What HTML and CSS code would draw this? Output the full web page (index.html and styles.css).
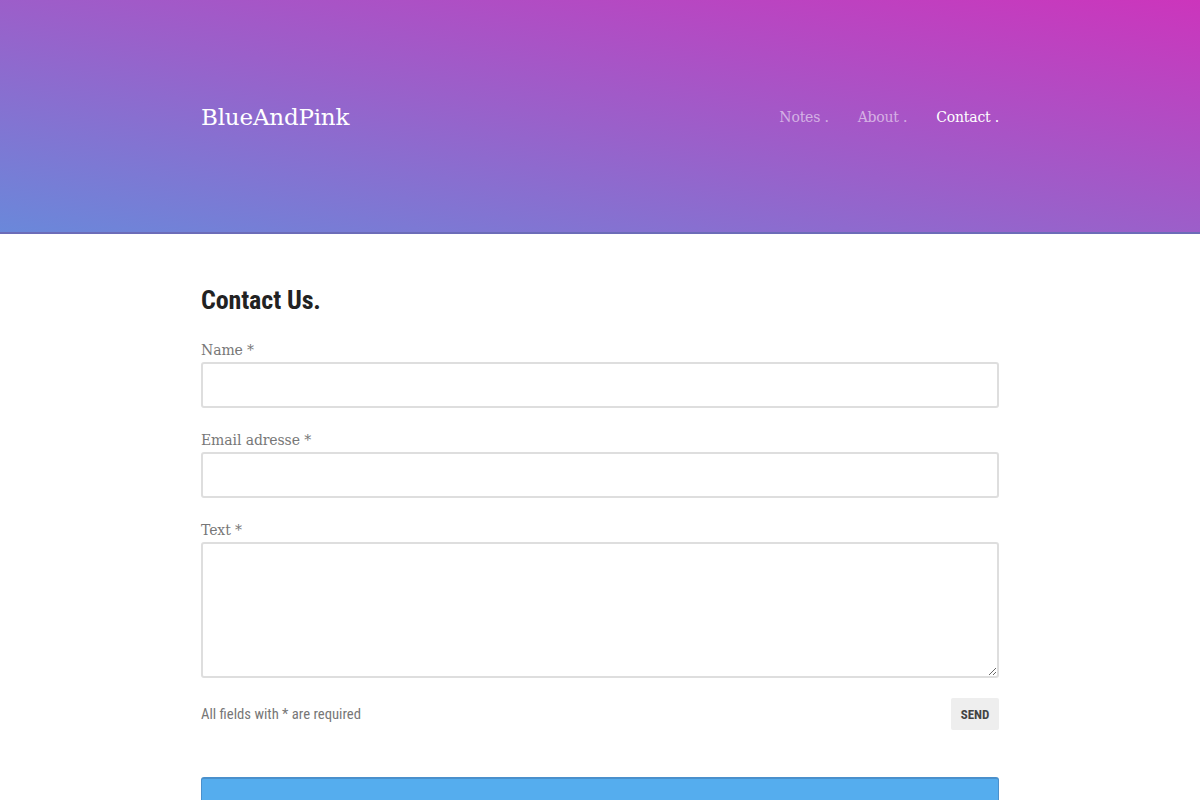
FILE: index.html
```html
<!DOCTYPE html>
<html lang="en">
<head>
<meta charset="utf-8">
<title>Contact - BlueAndPink</title>
<link rel="stylesheet" href="styles.css">
</head>
<body>
<header class="site-header">
  <div class="wrap header-row">
    <a class="brand" href="#">BlueAndPink</a>
    <nav class="nav">
      <a class="nav-link" href="#">Notes .</a>
      <a class="nav-link" href="#">About .</a>
      <a class="nav-link active" href="#">Contact .</a>
    </nav>
  </div>
</header>
<main class="wrap content">
  <h1 class="page-title">Contact Us.</h1>
  <form class="contact-form">
    <label class="field-label" for="name">Name *</label>
    <input class="field-input" id="name" type="text">
    <label class="field-label" for="email">Email adresse *</label>
    <input class="field-input" id="email" type="email">
    <label class="field-label" for="text">Text *</label>
    <textarea class="field-textarea" id="text"></textarea>
    <div class="form-footer">
      <span class="required-note">All fields with * are required</span>
      <button class="send-btn" type="button">SEND</button>
    </div>
  </form>
  <div class="blue-box"></div>
</main>
</body>
</html>
```
FILE: styles.css
```css
* { box-sizing: border-box; }
html, body { margin: 0; padding: 0; background: #fff; overflow: hidden; height: 100%; }
body { font-family: "Roboto Slab", "DejaVu Serif", "Liberation Serif", serif; }

.wrap { width: 798px; margin: 0 auto; }

.site-header {
  height: 234px;
  background: linear-gradient(to top right, #6a88da 0%, #9a60ca 48%, #cc35bc 100%);
  border-bottom: 2px solid #6c6cb8;
}
.header-row {
  height: 232px;
  padding-top: 2px;
  display: flex;
  align-items: center;
  justify-content: space-between;
}
.brand {
  color: #fff;
  text-decoration: none;
  font-size: 23px;
  letter-spacing: -0.2px;
}
.nav { display: flex; gap: 29px; }
.nav-link {
  color: rgba(255,255,255,0.55);
  text-decoration: none;
  font-size: 14px;
  letter-spacing: -0.2px;
}
.nav-link.active { color: #fff; }

.content { padding-top: 50px; }
.page-title {
  margin: 0 0 24px;
  font-family: "Roboto Condensed", "Liberation Sans Narrow", "DejaVu Sans Condensed", "Roboto", sans-serif;
  font-weight: 700;
  font-size: 26px;
  line-height: 32px;
  color: #222;
  letter-spacing: -0.1px;
}
.contact-form { display: flex; flex-direction: column; }
.field-label {
  font-size: 14px;
  line-height: 20px;
  color: #777;
  margin-bottom: 2px;
  letter-spacing: -0.1px;
}
.field-input, .field-textarea {
  width: 100%;
  border: 2px solid #dedede;
  border-radius: 3px;
  background: #fff;
  margin: 0 0 22px;
  font: inherit;
}
.field-input { height: 46px; }
.field-textarea { height: 136px; resize: vertical; margin-bottom: 20px; }
.form-footer {
  display: flex;
  align-items: center;
  justify-content: space-between;
}
.required-note {
  font-family: "Roboto Condensed", "Liberation Sans Narrow", "DejaVu Sans Condensed", "Roboto", sans-serif;
  font-size: 14.7px;
  color: #777;
}
.send-btn {
  width: 48px;
  height: 32px;
  border: 0;
  border-radius: 2px;
  background: #eeeeee;
  color: #444;
  font-family: "Roboto Condensed", "Liberation Sans Narrow", "DejaVu Sans Condensed", "Roboto", sans-serif;
  font-weight: 700;
  font-size: 13px;
  padding: 0;
}
.blue-box {
  margin-top: 47px;
  height: 23px;
  background: #55adee;
  border: 1px solid #4a90cc;
  border-top-width: 2px;
  border-bottom: 0;
  border-radius: 3px 3px 0 0;
}
```
